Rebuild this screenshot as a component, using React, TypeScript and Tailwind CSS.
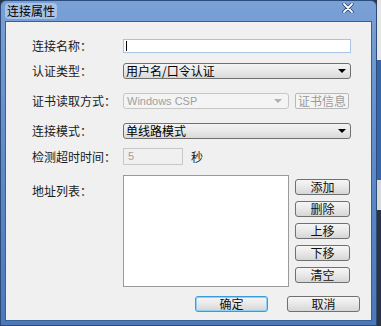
import React from "react";

const cjk = { fontFamily: '"Noto Sans CJK SC", "Noto Sans", sans-serif' };

const Btn = (props: { label: string; disabled?: boolean; focus?: boolean; className?: string }) => {
  const { label, disabled, focus, className } = props;
  if (disabled) {
    return (
      <div className={`flex items-center justify-center h-[16px] rounded-[2px] border border-[#b8b8b8] bg-[#f4f4f4] text-[12px] leading-none text-[#9a9a9a] ${className ?? ""}`}>
        {label}
      </div>
    );
  }
  return (
    <div
      className={`flex items-center justify-center h-[16px] rounded-[3px] border bg-gradient-to-b from-[#f6f6f6] via-[#e8e8e8] to-[#d6d6d6] text-[12px] leading-none text-[#111] ${focus ? "border-[#3c9ad6] shadow-[inset_0_0_0_1px_#8fd0f4]" : "border-[#707070]"} ${className ?? ""}`}
    >
      {label}
    </div>
  );
};

const Arrow = (props: { color?: string }) => (
  <svg width="8" height="4" viewBox="0 0 8 4" className="shrink-0">
    <polygon points="0,0 8,0 4,4" fill={props.color ?? "#000"} />
  </svg>
);

const Select = (props: { value: string; className?: string }) => (
  <div className={`flex items-center h-[16px] pl-[2px] pr-[4px] rounded-[3px] border border-[#707070] bg-gradient-to-b from-[#f4f4f4] via-[#e9e9e9] to-[#d9d9d9] ${props.className ?? ""}`}>
    <span className="flex-1 text-[12px] leading-none text-black">{props.value}</span>
    <Arrow />
  </div>
);

const Label = (props: { text: string }) => (
  <div className="w-[91px] shrink-0 text-[12px] leading-none text-[#1a1a1a]">{props.text}</div>
);

export default function App() {
  return (
    <div className="w-[381px] h-[326px] flex bg-[#2c3441] overflow-hidden" style={cjk}>
      {/* dialog window */}
      <div className="w-[377px] h-[326px] flex flex-col rounded-t-[6px] bg-gradient-to-b from-[#7aa1d6] via-[#5e8ac8] to-[#4a78ba] px-[4px] pb-[4px] border border-[#2c4d7c]">
        {/* title bar */}
        <div className="h-[20px] shrink-0 flex items-center justify-between">
          <div className="flex items-center h-[16px] px-[2px] rounded-[4px] bg-[#a9c3e8]">
            <span className="text-[12px] leading-none text-black">连接属性</span>
          </div>
          <svg width="12" height="10" viewBox="0 0 12 10" className="mr-[18px] -mt-[6px]">
            <path d="M2 1 L10 9 M10 1 L2 9" stroke="#1d3557" strokeWidth="3.2" strokeLinecap="round" />
            <path d="M2 1 L10 9 M10 1 L2 9" stroke="#ffffff" strokeWidth="1.8" strokeLinecap="round" />
          </svg>
        </div>

        {/* client area */}
        <div className="flex-1 flex flex-col bg-[#f0f0f0] border border-[#3a5f93] pl-[26px] pr-[11px] pt-[17px]">
          {/* name */}
          <div className="flex items-center h-[14px]">
            <Label text="连接名称：" />
            <div className="w-[228px] h-[14px] border border-[#a7c4e4] bg-white flex items-center pl-[2px]">
              <div className="w-[1px] h-[10px] bg-black" />
            </div>
          </div>

          {/* auth type */}
          <div className="flex items-center mt-[10px]">
            <Label text="认证类型：" />
            <Select value="用户名/口令认证" className="w-[228px]" />
          </div>

          {/* cert */}
          <div className="flex items-center mt-[14px]">
            <Label text="证书读取方式：" />
            <div className="w-[166px] h-[16px] flex items-center pl-[3px] pr-[6px] rounded-[3px] border border-[#c6c6c6] bg-[#f4f4f4]">
              <span className="flex-1 text-[11px] leading-none text-[#a0a0a0]" style={{ fontFamily: '"Liberation Sans", Arial, sans-serif' }}>
                Windows CSP
              </span>
              <Arrow color="#b0b0b0" />
            </div>
            <Btn label="证书信息" disabled className="w-[54px] ml-[6px]" />
          </div>

          {/* mode */}
          <div className="flex items-center mt-[14px]">
            <Label text="连接模式：" />
            <Select value="单线路模式" className="w-[228px]" />
          </div>

          {/* timeout */}
          <div className="flex items-center mt-[9px]">
            <Label text="检测超时时间：" />
            <div className="w-[60px] h-[17px] flex items-center pl-[4px] border border-[#c8c8c8] bg-[#f0f0f0] text-[11px] leading-none text-[#a0a0a0]" style={{ fontFamily: '"Liberation Sans", Arial, sans-serif' }}>
              5
            </div>
            <span className="ml-[8px] text-[12px] leading-none text-[#1a1a1a]">秒</span>
          </div>

          {/* address list */}
          <div className="flex mt-[10px]">
            <div className="w-[91px] shrink-0 pt-[2px]">
              <span className="text-[12px] leading-none text-[#1a1a1a]">地址列表：</span>
            </div>
            <div className="w-[166px] h-[112px] border border-[#9a9a9a] bg-white" />
            <div className="flex flex-col gap-[6px] ml-[6px] pt-[4px]">
              <Btn label="添加" className="w-[55px]" />
              <Btn label="删除" className="w-[55px]" />
              <Btn label="上移" className="w-[55px]" />
              <Btn label="下移" className="w-[55px]" />
              <Btn label="清空" className="w-[55px]" />
            </div>
          </div>

          {/* bottom buttons */}
          <div className="flex justify-end gap-[19px] mt-[9px]">
            <Btn label="确定" focus className="w-[73px]" />
            <Btn label="取消" className="w-[73px]" />
          </div>
        </div>
      </div>

      {/* background strip */}
      <div className="w-[4px] h-[326px] flex flex-col bg-[#e6e6e6]">
        <div className="h-[60px]" />
        <div className="h-[120px] bg-[#3565a8]" />
        <div className="h-[30px] bg-[#d8d8d8]" />
        <div className="flex-1 bg-[#2c3441]" />
      </div>
    </div>
  );
}
